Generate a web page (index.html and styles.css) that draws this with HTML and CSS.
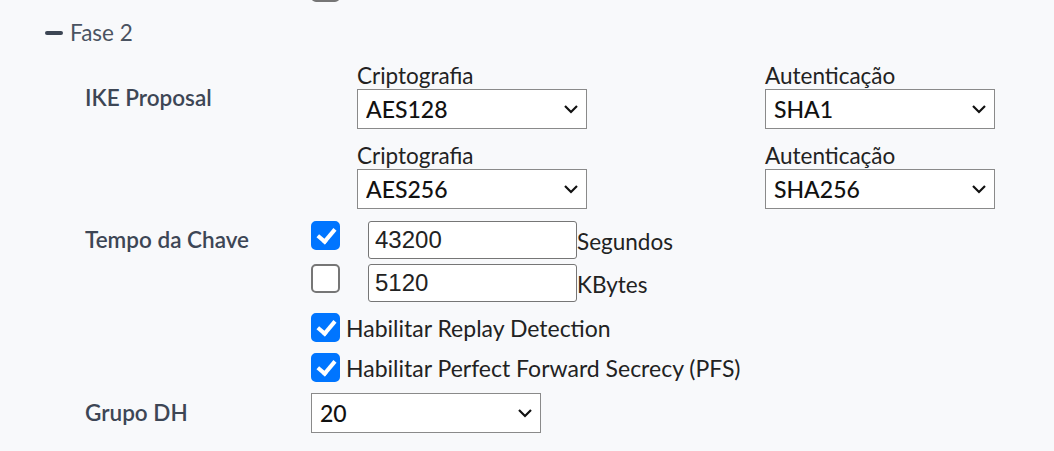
FILE: index.html
```html
<!DOCTYPE html>
<html lang="pt-BR">
<head>
    <meta charset="UTF-8">
    <meta name="viewport" content="width=device-width, initial-scale=1.0">
    <title>VPN - Fase 2</title>
    <link rel="stylesheet" href="styles.css">
</head>
<body>
    <div class="page">
        <!-- fim da fase 1 -->
        <div class="prev-row">
            <input type="checkbox" class="check">
        </div>

        <div class="section-title">
            <span class="collapse-icon"></span>Fase 2
        </div>

        <div class="form-row ike-row">
            <div class="row-label">IKE Proposal</div>
            <div class="ike-grid">
                <div class="field">
                    <label>Criptografia</label>
                    <div class="select-wrap">
                        <select class="select"><option>AES128</option></select>
                        <svg class="chevron" width="16" height="10" viewBox="0 0 16 10"><path d="M2 2l6 6 6-6" fill="none" stroke="#111" stroke-width="2.2"/></svg>
                    </div>
                </div>
                <div class="field">
                    <label>Autenticação</label>
                    <div class="select-wrap">
                        <select class="select"><option>SHA1</option></select>
                        <svg class="chevron" width="16" height="10" viewBox="0 0 16 10"><path d="M2 2l6 6 6-6" fill="none" stroke="#111" stroke-width="2.2"/></svg>
                    </div>
                </div>
                <div class="field">
                    <label>Criptografia</label>
                    <div class="select-wrap">
                        <select class="select"><option>AES256</option></select>
                        <svg class="chevron" width="16" height="10" viewBox="0 0 16 10"><path d="M2 2l6 6 6-6" fill="none" stroke="#111" stroke-width="2.2"/></svg>
                    </div>
                </div>
                <div class="field">
                    <label>Autenticação</label>
                    <div class="select-wrap">
                        <select class="select"><option>SHA256</option></select>
                        <svg class="chevron" width="16" height="10" viewBox="0 0 16 10"><path d="M2 2l6 6 6-6" fill="none" stroke="#111" stroke-width="2.2"/></svg>
                    </div>
                </div>
            </div>
        </div>

        <div class="form-row key-row">
            <div class="row-label">Tempo da Chave</div>
            <div class="key-lines">
                <div class="key-line">
                    <input type="checkbox" class="check" checked>
                    <input type="text" class="text-input" value="43200">
                    <span class="unit">Segundos</span>
                </div>
                <div class="key-line">
                    <input type="checkbox" class="check">
                    <input type="text" class="text-input" value="5120">
                    <span class="unit">KBytes</span>
                </div>
            </div>
        </div>

        <div class="form-row opt-row">
            <div></div>
            <div class="options">
                <label class="option"><input type="checkbox" class="check" checked>Habilitar Replay Detection</label>
                <label class="option"><input type="checkbox" class="check" checked>Habilitar Perfect Forward Secrecy (PFS)</label>
            </div>
        </div>

        <div class="form-row dh-row">
            <div class="row-label">Grupo DH</div>
            <div class="select-wrap">
                <select class="select"><option>20</option></select>
                <svg class="chevron" width="16" height="10" viewBox="0 0 16 10"><path d="M2 2l6 6 6-6" fill="none" stroke="#111" stroke-width="2.2"/></svg>
            </div>
        </div>
    </div>
</body>
</html>
```

FILE: styles.css
```css
body{
    margin:0;
    background:#f8f9fb;
    font-family:Lato, "Noto Sans", sans-serif;
    color:#222;
}

.page{
    padding-left:45px;
}

.prev-row{
    height:2px;
    padding-left:266px;
    overflow:hidden;
    display:flex;
    align-items:flex-end;
}

.prev-row .check{
    flex-shrink:0;
}

/* cabeçalho da seção */
.section-title{
    display:flex;
    align-items:center;
    margin-top:18px;
    height:26px;
    font-size:22.5px;
    line-height:26px;
    color:#4a5361;
}

.collapse-icon{
    width:18px;
    height:4px;
    border-radius:2px;
    background:#3d4654;
    margin-right:7px;
}

.form-row{
    display:grid;
    grid-template-columns:226px 1fr;
    padding-left:40px;
}

.row-label{
    font-size:22.5px;
    line-height:28px;
    font-weight:600;
    color:#3d4655;
}

/* IKE */
.ike-row{
    margin-top:17px;
}

.ike-row .row-label{
    padding-top:21px;
}

.ike-grid{
    display:grid;
    grid-template-columns:230px 230px;
    column-gap:178px;
    row-gap:14px;
    padding-left:46px;
}

.field label{
    display:block;
    font-size:22.5px;
    line-height:26px;
    color:#222;
}

.select-wrap{
    position:relative;
    width:230px;
}

.select{
    appearance:none;
    width:230px;
    height:40px;
    margin:0;
    padding:0 30px 0 8px;
    border:1px solid #8a8a8a;
    border-radius:0;
    background:#fff;
    font-family:Lato, sans-serif;
    font-size:23px;
    font-weight:500;
    color:#111;
}

.chevron{
    position:absolute;
    right:8px;
    top:15px;
    pointer-events:none;
}

/* checkbox */
.check{
    appearance:none;
    position:relative;
    width:29px;
    height:29px;
    margin:0;
    border:2px solid #767676;
    border-radius:5px;
    background:#fff;
}

.check:checked{
    background:#0075ff;
    border-color:#0075ff;
}

.check:checked::after{
    content:'';
    position:absolute;
    left:8px;
    top:2px;
    width:7px;
    height:14px;
    border:solid #fff;
    border-width:0 4px 4px 0;
    transform:rotate(40deg);
}

/* tempo da chave */
.key-row{
    margin-top:12px;
}

.key-row .row-label{
    padding-top:5px;
}

.key-lines{
    display:flex;
    flex-direction:column;
    gap:5px;
}

.key-line{
    display:flex;
    align-items:flex-start;
}

.key-line .check{
    margin-right:28px;
}

.text-input{
    width:209px;
    height:38px;
    box-sizing:border-box;
    margin:0;
    padding:0 6px;
    border:1px solid #767676;
    border-radius:3px;
    background:#fff;
    font-family:"Liberation Sans", Arial, sans-serif;
    font-size:24px;
    color:#222;
}

.unit{
    align-self:center;
    font-size:22.5px;
    line-height:26px;
    padding-top:3px;
    color:#222;
}

/* opções */
.options{
    display:flex;
    flex-direction:column;
    gap:11px;
    margin-top:11px;
}

.option{
    display:flex;
    align-items:center;
    gap:6px;
    font-size:23px;
    line-height:26px;
    color:#222;
}

.dh-row{
    margin-top:11px;
    align-items:center;
}
```
